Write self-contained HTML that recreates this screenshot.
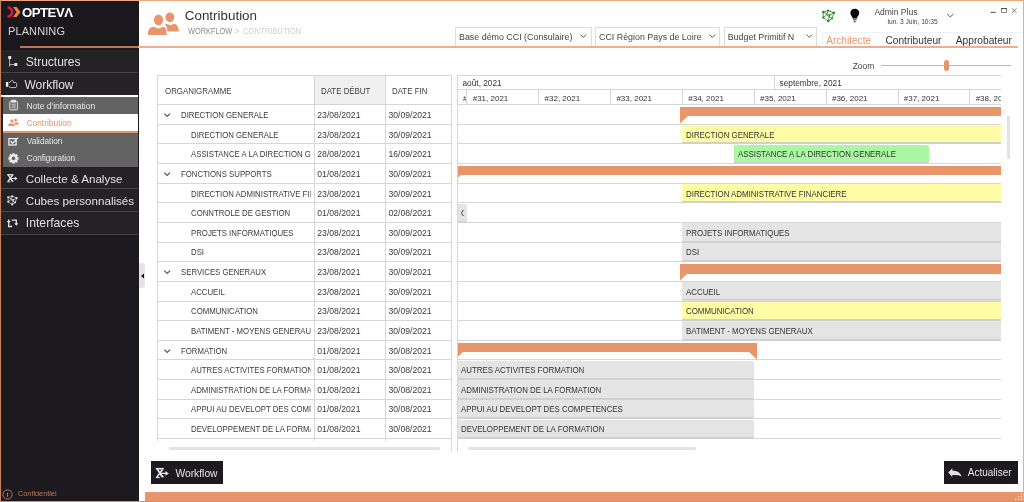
<!DOCTYPE html>
<html><head><meta charset="utf-8"><title>Opteva Planning</title>
<style>
*{margin:0;padding:0;box-sizing:border-box}
html,body{width:1024px;height:502px;overflow:hidden;background:#fff;font-family:"Liberation Sans",sans-serif;position:relative}
.a{position:absolute;white-space:nowrap}
svg{position:absolute;overflow:visible}
#w{position:absolute;left:0;top:0;width:1024px;height:502px;overflow:hidden;background:#fff;will-change:transform}
</style></head><body><div id="w">
<div class="a" style="left:0px;top:0px;width:139px;height:502px;background:#1c1a1e;"></div>
<div class="a" style="left:0px;top:0px;width:139px;height:50px;background:#1a181c;"></div>
<svg style="left:0;top:0" width="30" height="24">
  <path d="M7.6 7.2 Q12.2 8.6 12.2 12 Q12.2 15.4 7.6 16.8" fill="none" stroke="#e0193f" stroke-width="2.4"/>
  <path d="M13 7 L16.6 7 L20.4 12 L16.6 17 L13 17 L16.6 12 Z" fill="#f0833e"/>
</svg>
<div class="a" style="left:22px;top:5.63px;font-size:13.2px;line-height:13.2px;color:#fff;font-weight:bold;letter-spacing:-0.5px">OPTEVΛ</div>
<div class="a" style="left:8px;top:25.79px;font-size:11px;line-height:11px;color:#d4d4d4;letter-spacing:0.1px">PLANNING</div>
<div class="a" style="left:20px;top:46px;width:118px;height:2px;background:#b9755a;"></div>
<div class="a" style="left:1px;top:50px;width:137px;height:184px;background:#242224;"></div>
<div class="a" style="left:1px;top:72px;width:137px;height:1px;background:#464646;"></div>
<div class="a" style="left:1px;top:188px;width:137px;height:1px;background:#464646;"></div>
<div class="a" style="left:1px;top:211px;width:137px;height:1px;background:#464646;"></div>
<div class="a" style="left:1px;top:234px;width:137px;height:1px;background:#464646;"></div>
<div class="a" style="left:1px;top:95px;width:137px;height:2px;background:#fff;"></div>
<div class="a" style="left:3px;top:97px;width:135px;height:70px;background:#636363;"></div>
<div class="a" style="left:3px;top:114px;width:135px;height:17px;background:#fff;"></div>
<div class="a" style="left:3px;top:131px;width:135px;height:2px;background:#e8946a;"></div>
<div class="a" style="left:25.8px;top:56.04px;font-size:12px;line-height:12px;color:#e2e2e2;">Structures</div>
<div class="a" style="left:24.4px;top:79.04px;font-size:12px;line-height:12px;color:#e2e2e2;">Workflow</div>
<div class="a" style="left:26.5px;top:102.0px;font-size:8.5px;line-height:8.5px;color:#e8e8e8;">Note d'information</div>
<div class="a" style="left:26.5px;top:119.19px;font-size:8.4px;line-height:8.4px;color:#e8946a;">Contribution</div>
<div class="a" style="left:26.8px;top:138.42px;font-size:8.25px;line-height:8.25px;color:#e8e8e8;">Validation</div>
<div class="a" style="left:26.8px;top:155.2px;font-size:8.15px;line-height:8.15px;color:#e8e8e8;">Configuration</div>
<div class="a" style="left:25.8px;top:172.88px;font-size:11.6px;line-height:11.6px;color:#e2e2e2;">Collecte &amp; Analyse</div>
<div class="a" style="left:25.8px;top:194.98px;font-size:11.6px;line-height:11.6px;color:#e2e2e2;">Cubes personnalisés</div>
<div class="a" style="left:25.8px;top:217.47px;font-size:12.2px;line-height:12.2px;color:#e2e2e2;">Interfaces</div>
<svg style="left:0;top:0" width="139" height="240">
 <g fill="none" stroke="#e6e6e6">
  <rect x="8.2" y="56.1" width="3" height="3" fill="#e6e6e6" stroke="none" rx="0.4"/>
  <path d="M9.6 59 V66.6 M9.6 64.6 H14.6" stroke-width="0.75"/>
  <rect x="14.3" y="63.1" width="3" height="3" fill="#e6e6e6" stroke="none" rx="0.4"/>
 </g>
 <rect x="5.9" y="82" width="2.4" height="4.8" fill="#eee"/>
 <path d="M8.8 83.2 L11.6 80.6 Q12.4 79.9 12.9 80.8 L13.6 82.6 L15.6 82.6 Q16.8 82.8 16.7 84.6 L16.6 86.2 Q16.4 87.6 15 87.6 L10.8 87.6 L8.8 86.6" fill="none" stroke="#c8c8c8" stroke-width="0.95"/>
 <g fill="none" stroke="#e8e8e8" stroke-width="1">
  <rect x="9.8" y="101.3" width="7.6" height="8.6" rx="0.8"/>
  <rect x="11.8" y="100.3" width="3.6" height="1.8" fill="#e8e8e8"/>
  <path d="M11.5 104.2 H15.8 M11.5 106 H15.8 M11.5 107.8 H15.8" stroke-width="0.8"/>
 </g>
 <g fill="#e8946a" transform="translate(8.3 118.3) scale(0.335) translate(-147.9 -12)">
  <ellipse cx="158.5" cy="20" rx="4.6" ry="5.4"/>
  <path d="M147.9 35 C147.9 30 149.5 27.5 152.5 27 L154.3 26.7 Q158.5 30.2 162.7 26.7 L164.2 27 C166 27.8 166.6 30.5 166.6 35 Z"/>
  <ellipse cx="169.9" cy="17.3" rx="4.4" ry="4.9"/>
  <path d="M165 24.6 Q166 23.5 167.1 24 Q170.2 26.4 173.6 23.7 L175 23.9 C177.8 24.8 178.8 28 178.8 31.6 L167.4 31.6 C167.2 28 166.4 26 165 24.6 Z"/>
 </g>
 <g fill="none" stroke="#ececec" stroke-width="1.3">
  <rect x="8.9" y="138.6" width="7.2" height="6.4"/>
  <path d="M10.6 141 L12.6 143.2 L18.2 137.6"/>
 </g>
 <g fill="#ececec">
  <g transform="translate(13.5 158.4)">
   <circle r="3.8"/>
   <g id="t"><rect x="-1.3" y="-5.1" width="2.6" height="2.4"/></g>
   <rect x="-1.3" y="-5.1" width="2.6" height="2.4" transform="rotate(45)"/>
   <rect x="-1.3" y="-5.1" width="2.6" height="2.4" transform="rotate(90)"/>
   <rect x="-1.3" y="-5.1" width="2.6" height="2.4" transform="rotate(135)"/>
   <rect x="-1.3" y="-5.1" width="2.6" height="2.4" transform="rotate(180)"/>
   <rect x="-1.3" y="-5.1" width="2.6" height="2.4" transform="rotate(225)"/>
   <rect x="-1.3" y="-5.1" width="2.6" height="2.4" transform="rotate(270)"/>
   <rect x="-1.3" y="-5.1" width="2.6" height="2.4" transform="rotate(315)"/>
   <circle r="1.8" fill="#636363"/>
  </g>
 </g>
 <g transform="translate(7 174.2) scale(0.8) translate(-155.7 -468)">
  <g fill="none" stroke="#e6e6e6">
   <path d="M155.8 468.7 H163.8" stroke-width="1.6"/>
   <path d="M157.2 469 L162.6 477.3 M162.8 469 L156.8 477.3" stroke-width="1.7"/>
   <path d="M155.8 477.6 H159.8" stroke-width="1.1"/>
   <path d="M159.6 473.4 H166.4 M160.4 474.2 L163.6 477.2" stroke-width="1.3"/>
  </g><path d="M165.4 471 L168.8 473.4 L165.4 475.8 Z" fill="#e6e6e6"/>
 </g>
 <g transform="translate(7 195.3) scale(0.8) translate(-821.7 -9.5)">
  <g stroke="#dcdcdc" stroke-width="0.9" fill="none">
   <path d="M823.2 12 L828.2 10.6 L833.9 12.8 L832 18.4 L828.2 21 L823.2 17.6 Z"/>
   <path d="M823.2 12 L829.6 15.2 L833.9 12.8 M829.6 15.2 L828.2 21 M826.5 15 L832 18.4 M826.5 15 L828.2 10.6 M826.5 15 L823.2 17.6"/>
  </g>
  <g fill="#e6e6e6"><circle cx="823.2" cy="12" r="1.3"/><circle cx="828.2" cy="10.6" r="1.2"/><circle cx="833.9" cy="12.8" r="1.3"/><circle cx="832" cy="18.4" r="1.1"/><circle cx="828.2" cy="21" r="1.3"/><circle cx="823.2" cy="17.6" r="1.2"/><circle cx="829.6" cy="15.2" r="1"/></g>
 </g>
 <g fill="none" stroke="#e6e6e6" stroke-width="1.3">
  <path d="M8.7 219.6 V226.5 H12.2 M7.2 221.6 H10.4"/>
  <path d="M11.8 220.2 H16.3 V224.2"/>
 </g>
 <path d="M14.3 223.2 L16.3 225.8 L18.3 223.2 Z" fill="#e6e6e6"/>
</svg>
<svg style="left:0;top:486px" width="16" height="16">
  <circle cx="7.5" cy="8.5" r="4.6" fill="none" stroke="#b8795a" stroke-width="1"/>
  <rect x="7" y="6.6" width="1.1" height="4.2" fill="#b8795a"/>
</svg>
<div class="a" style="left:18px;top:489.62px;font-size:7.3px;line-height:7.3px;color:#b8795a;">Confidentiel</div>
<div class="a" style="left:138.5px;top:263px;width:6.2px;height:25.3px;background:#e4e4e4;border-radius:0 3px 3px 0"></div>
<svg style="left:0;top:0" width="150" height="300"><path d="M141 275.9 L144 273.4 L144 278.4 Z" fill="#111"/></svg>
<svg style="left:0;top:0" width="200" height="46">
 <g fill="#e9956b" id="ppl">
  <ellipse cx="158.5" cy="20" rx="4.6" ry="5.4"/>
  <path d="M147.9 35 C147.9 30 149.5 27.5 152.5 27 L154.3 26.7 Q158.5 30.2 162.7 26.7 L164.2 27 C166 27.8 166.6 30.5 166.6 35 Z"/>
  <ellipse cx="169.9" cy="17.3" rx="4.4" ry="4.9"/>
  <path d="M165 24.6 Q166 23.5 167.1 24 Q170.2 26.4 173.6 23.7 L175 23.9 C177.8 24.8 178.8 28 178.8 31.6 L167.4 31.6 C167.2 28 166.4 26 165 24.6 Z"/>
 </g>
</svg>
<div class="a" style="left:184.8px;top:8.76px;font-size:13.4px;line-height:13.4px;color:#333;">Contribution</div>
<div class="a" style="left:188px;top:26.84px;font-size:8.7px;line-height:8.7px;color:#8a8a8a;transform-origin:0 0;transform:scaleX(0.85)">WORKFLOW</div>
<div class="a" style="left:235px;top:26.84px;font-size:8.7px;line-height:8.7px;color:#c4c4c4;transform-origin:0 0;transform:scaleX(0.85)">&gt;</div>
<div class="a" style="left:242.8px;top:26.84px;font-size:8.7px;line-height:8.7px;color:#cfcfcf;transform-origin:0 0;transform:scaleX(0.879)">CONTRIBUTION</div>
<div class="a" style="left:455.4px;top:27px;width:136.2px;height:19px;background:#fff;border:1px solid #dcdcdc;border-bottom:none"></div>
<div class="a" style="left:459px;top:32.97px;font-size:8.9px;line-height:8.9px;color:#444;">Base démo CCI (Consulaire)</div>
<svg style="left:579.6px;top:34.4px" width="7" height="5"><path d="M0.5 0.6 L3.3 3.4 L6.1 0.6" fill="none" stroke="#555" stroke-width="1"/></svg>
<div class="a" style="left:594.7px;top:27px;width:125.3px;height:19px;background:#fff;border:1px solid #dcdcdc;border-bottom:none"></div>
<div class="a" style="left:599px;top:32.97px;font-size:8.9px;line-height:8.9px;color:#444;">CCI Région Pays de Loire</div>
<svg style="left:709.4px;top:34.4px" width="7" height="5"><path d="M0.5 0.6 L3.3 3.4 L6.1 0.6" fill="none" stroke="#555" stroke-width="1"/></svg>
<div class="a" style="left:723.5px;top:27px;width:93.5px;height:19px;background:#fff;border:1px solid #dcdcdc;border-bottom:none"></div>
<div class="a" style="left:727.7px;top:32.97px;font-size:8.9px;line-height:8.9px;color:#444;">Budget Primitif N</div>
<svg style="left:805.5px;top:34.4px" width="7" height="5"><path d="M0.5 0.6 L3.3 3.4 L6.1 0.6" fill="none" stroke="#555" stroke-width="1"/></svg>
<div class="a" style="left:138px;top:46px;width:880px;height:2px;background:#efae8e;"></div>
<div class="a" style="left:822px;top:31.5px;width:200px;height:15px;background:transparent;border:1px solid #eef3f8;border-bottom:none;border-right:none"></div>
<div class="a" style="left:826.2px;top:35.85px;font-size:10.1px;line-height:10.1px;color:#e9956b;">Architecte</div>
<div class="a" style="left:885.4px;top:35.77px;font-size:10.2px;line-height:10.2px;color:#333;">Contributeur</div>
<div class="a" style="left:955.8px;top:35.77px;font-size:10.2px;line-height:10.2px;color:#333;">Approbateur</div>
<svg style="left:0;top:0" width="1024" height="30">
 <g stroke="#1e8c1e" stroke-width="0.8" fill="none">
  <path d="M823.2 12 L828.2 10.6 L833.9 12.8 L832 18.4 L828.2 21 L823.2 17.6 Z"/>
  <path d="M823.2 12 L829.6 15.2 L833.9 12.8 M829.6 15.2 L828.2 21 M826.5 15 L832 18.4 M826.5 15 L828.2 10.6 M826.5 15 L823.2 17.6"/>
 </g>
 <g fill="#1e8c1e"><circle cx="823.2" cy="12" r="1.2"/><circle cx="828.2" cy="10.6" r="1.1"/><circle cx="833.9" cy="12.8" r="1.3"/><circle cx="832" cy="18.4" r="1"/><circle cx="828.2" cy="21" r="1.2"/><circle cx="823.2" cy="17.6" r="1.1"/><circle cx="829.6" cy="15.2" r="0.9"/></g>
 <path d="M854.8 8.7 C857.5 8.7 859.2 10.6 859.2 13 C859.2 15.2 857.4 16.6 856.8 18.4 L852.8 18.4 C852.2 16.6 850.4 15.2 850.4 13 C850.4 10.6 852.1 8.7 854.8 8.7 Z" fill="#000"/>
 <rect x="853" y="19" width="3.6" height="1.2" fill="#666"/>
 <rect x="853.3" y="20.6" width="3" height="1.2" fill="#777"/>
 <rect x="854" y="22" width="1.6" height="0.7" fill="#888"/>
 <path d="M947.2 14 L950.3 17 L953.4 14" fill="none" stroke="#555" stroke-width="1"/>
 <rect x="990.6" y="11.8" width="5.2" height="1.1" fill="#555"/>
 <rect x="1001.5" y="8.4" width="5.1" height="4.2" fill="none" stroke="#666" stroke-width="0.75"/>
 <rect x="1001.2" y="8" width="5.7" height="1.1" fill="#555"/>
 <path d="M1012 8.4 L1016.5 12.7 M1016.5 8.4 L1012 12.7" stroke="#666" stroke-width="0.85"/>
</svg>
<div class="a" style="left:874.4px;top:7.8px;font-size:8.5px;line-height:8.5px;color:#444;">Admin Plus</div>
<div class="a" style="left:887.6px;top:18.53px;font-size:6.7px;line-height:6.7px;color:#444;letter-spacing:-0.05px">lun. 3 Juin, 10:35</div>
<div class="a" style="left:852.7px;top:62.25px;font-size:8.45px;line-height:8.45px;color:#444;">Zoom</div>
<div class="a" style="left:881.3px;top:64.6px;width:130px;height:1.2px;background:#b8b8b8;"></div>
<div class="a" style="left:943.8px;top:59.9px;width:5.2px;height:10.9px;background:#e9956b;border-radius:2.6px"></div>
<div class="a" style="left:314.5px;top:75.5px;width:71px;height:29px;background:#f0f0f0;"></div>
<div class="a" style="left:157.5px;top:75px;width:294.3px;height:1px;background:#d6d6d6;"></div>
<div class="a" style="left:157.5px;top:104.2px;width:294.3px;height:1px;background:#d6d6d6;"></div>
<div class="a" style="left:157.5px;top:123.83px;width:294.3px;height:1px;background:#d6d6d6;"></div>
<div class="a" style="left:157.5px;top:143.46px;width:294.3px;height:1px;background:#d6d6d6;"></div>
<div class="a" style="left:157.5px;top:163.09px;width:294.3px;height:1px;background:#d6d6d6;"></div>
<div class="a" style="left:157.5px;top:182.72px;width:294.3px;height:1px;background:#d6d6d6;"></div>
<div class="a" style="left:157.5px;top:202.35px;width:294.3px;height:1px;background:#d6d6d6;"></div>
<div class="a" style="left:157.5px;top:221.98px;width:294.3px;height:1px;background:#d6d6d6;"></div>
<div class="a" style="left:157.5px;top:241.61px;width:294.3px;height:1px;background:#d6d6d6;"></div>
<div class="a" style="left:157.5px;top:261.24px;width:294.3px;height:1px;background:#d6d6d6;"></div>
<div class="a" style="left:157.5px;top:280.87px;width:294.3px;height:1px;background:#d6d6d6;"></div>
<div class="a" style="left:157.5px;top:300.5px;width:294.3px;height:1px;background:#d6d6d6;"></div>
<div class="a" style="left:157.5px;top:320.13px;width:294.3px;height:1px;background:#d6d6d6;"></div>
<div class="a" style="left:157.5px;top:339.76px;width:294.3px;height:1px;background:#d6d6d6;"></div>
<div class="a" style="left:157.5px;top:359.39px;width:294.3px;height:1px;background:#d6d6d6;"></div>
<div class="a" style="left:157.5px;top:379.02px;width:294.3px;height:1px;background:#d6d6d6;"></div>
<div class="a" style="left:157.5px;top:398.65px;width:294.3px;height:1px;background:#d6d6d6;"></div>
<div class="a" style="left:157.5px;top:418.28px;width:294.3px;height:1px;background:#d6d6d6;"></div>
<div class="a" style="left:157.5px;top:437.91px;width:294.3px;height:1px;background:#d6d6d6;"></div>
<div class="a" style="left:157.2px;top:75px;width:1px;height:365.5px;background:#d6d6d6;"></div>
<div class="a" style="left:313.9px;top:75px;width:1px;height:365.5px;background:#d6d6d6;"></div>
<div class="a" style="left:385px;top:75px;width:1px;height:365.5px;background:#d6d6d6;"></div>
<div class="a" style="left:450.8px;top:75px;width:1px;height:376px;background:#d6d6d6;"></div>
<div class="a" style="left:164.5px;top:87.12px;font-size:8.6px;line-height:8.6px;color:#3c3c3c;transform-origin:0 0;transform:scaleX(0.918)">ORGANIGRAMME</div>
<div class="a" style="left:321px;top:87.12px;font-size:8.6px;line-height:8.6px;color:#3c3c3c;transform-origin:0 0;transform:scaleX(0.918)">DATE DÉBUT</div>
<div class="a" style="left:392px;top:87.12px;font-size:8.6px;line-height:8.6px;color:#3c3c3c;transform-origin:0 0;transform:scaleX(0.918)">DATE FIN</div>
<svg style="left:164px;top:113.0px" width="7" height="5"><path d="M0.3 0.6 L3.2 3.5 L6.1 0.6" fill="none" stroke="#555" stroke-width="1.2"/></svg>
<div class="a" style="left:180.5px;top:111.02px;width:142.78px;overflow:hidden;font-size:8.6px;line-height:8.6px;color:#3a3a3a;transform-origin:0 0;transform:scaleX(0.907)">DIRECTION GENERALE</div>
<div class="a" style="left:317.3px;top:110.98px;font-size:8.65px;line-height:8.65px;color:#3a3a3a;">23/08/2021</div>
<div class="a" style="left:388.5px;top:110.98px;font-size:8.65px;line-height:8.65px;color:#3a3a3a;">30/09/2021</div>
<div class="a" style="left:190.5px;top:130.65px;width:131.75px;overflow:hidden;font-size:8.6px;line-height:8.6px;color:#3a3a3a;transform-origin:0 0;transform:scaleX(0.907)">DIRECTION GENERALE</div>
<div class="a" style="left:317.3px;top:130.61px;font-size:8.65px;line-height:8.65px;color:#3a3a3a;">23/08/2021</div>
<div class="a" style="left:388.5px;top:130.61px;font-size:8.65px;line-height:8.65px;color:#3a3a3a;">30/09/2021</div>
<div class="a" style="left:190.5px;top:150.28px;width:131.75px;overflow:hidden;font-size:8.6px;line-height:8.6px;color:#3a3a3a;transform-origin:0 0;transform:scaleX(0.907)">ASSISTANCE A LA DIRECTION GENERALE</div>
<div class="a" style="left:317.3px;top:150.24px;font-size:8.65px;line-height:8.65px;color:#3a3a3a;">28/08/2021</div>
<div class="a" style="left:388.5px;top:150.24px;font-size:8.65px;line-height:8.65px;color:#3a3a3a;">16/09/2021</div>
<svg style="left:164px;top:171.89px" width="7" height="5"><path d="M0.3 0.6 L3.2 3.5 L6.1 0.6" fill="none" stroke="#555" stroke-width="1.2"/></svg>
<div class="a" style="left:180.5px;top:169.91px;width:142.78px;overflow:hidden;font-size:8.6px;line-height:8.6px;color:#3a3a3a;transform-origin:0 0;transform:scaleX(0.907)">FONCTIONS SUPPORTS</div>
<div class="a" style="left:317.3px;top:169.87px;font-size:8.65px;line-height:8.65px;color:#3a3a3a;">01/08/2021</div>
<div class="a" style="left:388.5px;top:169.87px;font-size:8.65px;line-height:8.65px;color:#3a3a3a;">30/09/2021</div>
<div class="a" style="left:190.5px;top:189.54px;width:131.75px;overflow:hidden;font-size:8.6px;line-height:8.6px;color:#3a3a3a;transform-origin:0 0;transform:scaleX(0.907)">DIRECTION ADMINISTRATIVE FINANCIERE</div>
<div class="a" style="left:317.3px;top:189.5px;font-size:8.65px;line-height:8.65px;color:#3a3a3a;">23/08/2021</div>
<div class="a" style="left:388.5px;top:189.5px;font-size:8.65px;line-height:8.65px;color:#3a3a3a;">30/09/2021</div>
<div class="a" style="left:190.5px;top:209.17px;width:131.75px;overflow:hidden;font-size:8.6px;line-height:8.6px;color:#3a3a3a;transform-origin:0 0;transform:scaleX(0.907)">CONNTROLE DE GESTION</div>
<div class="a" style="left:317.3px;top:209.13px;font-size:8.65px;line-height:8.65px;color:#3a3a3a;">01/08/2021</div>
<div class="a" style="left:388.5px;top:209.13px;font-size:8.65px;line-height:8.65px;color:#3a3a3a;">02/08/2021</div>
<div class="a" style="left:190.5px;top:228.8px;width:131.75px;overflow:hidden;font-size:8.6px;line-height:8.6px;color:#3a3a3a;transform-origin:0 0;transform:scaleX(0.907)">PROJETS INFORMATIQUES</div>
<div class="a" style="left:317.3px;top:228.76px;font-size:8.65px;line-height:8.65px;color:#3a3a3a;">23/08/2021</div>
<div class="a" style="left:388.5px;top:228.76px;font-size:8.65px;line-height:8.65px;color:#3a3a3a;">30/09/2021</div>
<div class="a" style="left:190.5px;top:248.43px;width:131.75px;overflow:hidden;font-size:8.6px;line-height:8.6px;color:#3a3a3a;transform-origin:0 0;transform:scaleX(0.907)">DSI</div>
<div class="a" style="left:317.3px;top:248.39px;font-size:8.65px;line-height:8.65px;color:#3a3a3a;">23/08/2021</div>
<div class="a" style="left:388.5px;top:248.39px;font-size:8.65px;line-height:8.65px;color:#3a3a3a;">30/09/2021</div>
<svg style="left:164px;top:270.04px" width="7" height="5"><path d="M0.3 0.6 L3.2 3.5 L6.1 0.6" fill="none" stroke="#555" stroke-width="1.2"/></svg>
<div class="a" style="left:180.5px;top:268.06px;width:142.78px;overflow:hidden;font-size:8.6px;line-height:8.6px;color:#3a3a3a;transform-origin:0 0;transform:scaleX(0.907)">SERVICES GENERAUX</div>
<div class="a" style="left:317.3px;top:268.02px;font-size:8.65px;line-height:8.65px;color:#3a3a3a;">23/08/2021</div>
<div class="a" style="left:388.5px;top:268.02px;font-size:8.65px;line-height:8.65px;color:#3a3a3a;">30/09/2021</div>
<div class="a" style="left:190.5px;top:287.69px;width:131.75px;overflow:hidden;font-size:8.6px;line-height:8.6px;color:#3a3a3a;transform-origin:0 0;transform:scaleX(0.907)">ACCUEIL</div>
<div class="a" style="left:317.3px;top:287.65px;font-size:8.65px;line-height:8.65px;color:#3a3a3a;">23/08/2021</div>
<div class="a" style="left:388.5px;top:287.65px;font-size:8.65px;line-height:8.65px;color:#3a3a3a;">30/09/2021</div>
<div class="a" style="left:190.5px;top:307.32px;width:131.75px;overflow:hidden;font-size:8.6px;line-height:8.6px;color:#3a3a3a;transform-origin:0 0;transform:scaleX(0.907)">COMMUNICATION</div>
<div class="a" style="left:317.3px;top:307.28px;font-size:8.65px;line-height:8.65px;color:#3a3a3a;">23/08/2021</div>
<div class="a" style="left:388.5px;top:307.28px;font-size:8.65px;line-height:8.65px;color:#3a3a3a;">30/09/2021</div>
<div class="a" style="left:190.5px;top:326.95px;width:131.75px;overflow:hidden;font-size:8.6px;line-height:8.6px;color:#3a3a3a;transform-origin:0 0;transform:scaleX(0.907)">BATIMENT - MOYENS GENERAUX</div>
<div class="a" style="left:317.3px;top:326.91px;font-size:8.65px;line-height:8.65px;color:#3a3a3a;">23/08/2021</div>
<div class="a" style="left:388.5px;top:326.91px;font-size:8.65px;line-height:8.65px;color:#3a3a3a;">30/09/2021</div>
<svg style="left:164px;top:348.56px" width="7" height="5"><path d="M0.3 0.6 L3.2 3.5 L6.1 0.6" fill="none" stroke="#555" stroke-width="1.2"/></svg>
<div class="a" style="left:180.5px;top:346.58px;width:142.78px;overflow:hidden;font-size:8.6px;line-height:8.6px;color:#3a3a3a;transform-origin:0 0;transform:scaleX(0.907)">FORMATION</div>
<div class="a" style="left:317.3px;top:346.54px;font-size:8.65px;line-height:8.65px;color:#3a3a3a;">01/08/2021</div>
<div class="a" style="left:388.5px;top:346.54px;font-size:8.65px;line-height:8.65px;color:#3a3a3a;">30/08/2021</div>
<div class="a" style="left:190.5px;top:366.21px;width:131.75px;overflow:hidden;font-size:8.6px;line-height:8.6px;color:#3a3a3a;transform-origin:0 0;transform:scaleX(0.907)">AUTRES ACTIVITES FORMATION</div>
<div class="a" style="left:317.3px;top:366.17px;font-size:8.65px;line-height:8.65px;color:#3a3a3a;">01/08/2021</div>
<div class="a" style="left:388.5px;top:366.17px;font-size:8.65px;line-height:8.65px;color:#3a3a3a;">30/08/2021</div>
<div class="a" style="left:190.5px;top:385.84px;width:131.75px;overflow:hidden;font-size:8.6px;line-height:8.6px;color:#3a3a3a;transform-origin:0 0;transform:scaleX(0.907)">ADMINISTRATION DE LA FORMATION</div>
<div class="a" style="left:317.3px;top:385.8px;font-size:8.65px;line-height:8.65px;color:#3a3a3a;">01/08/2021</div>
<div class="a" style="left:388.5px;top:385.8px;font-size:8.65px;line-height:8.65px;color:#3a3a3a;">30/08/2021</div>
<div class="a" style="left:190.5px;top:405.47px;width:131.75px;overflow:hidden;font-size:8.6px;line-height:8.6px;color:#3a3a3a;transform-origin:0 0;transform:scaleX(0.907)">APPUI AU DEVELOPT DES COMPETENCES</div>
<div class="a" style="left:317.3px;top:405.43px;font-size:8.65px;line-height:8.65px;color:#3a3a3a;">01/08/2021</div>
<div class="a" style="left:388.5px;top:405.43px;font-size:8.65px;line-height:8.65px;color:#3a3a3a;">30/08/2021</div>
<div class="a" style="left:190.5px;top:425.1px;width:131.75px;overflow:hidden;font-size:8.6px;line-height:8.6px;color:#3a3a3a;transform-origin:0 0;transform:scaleX(0.907)">DEVELOPPEMENT DE LA FORMATION</div>
<div class="a" style="left:317.3px;top:425.06px;font-size:8.65px;line-height:8.65px;color:#3a3a3a;">01/08/2021</div>
<div class="a" style="left:388.5px;top:425.06px;font-size:8.65px;line-height:8.65px;color:#3a3a3a;">30/08/2021</div>
<div class="a" style="left:168.7px;top:447.4px;width:271px;height:3px;background:#e2e2e2;border-radius:1.5px"></div>
<div class="a" style="left:457.5px;top:75px;width:543.5px;height:366px;overflow:hidden">
<div class="a" style="left:0.0px;top:0px;width:543.5px;height:1px;background:#d6d6d6;"></div>
<div class="a" style="left:0.0px;top:13.6px;width:543.5px;height:1px;background:#d6d6d6;"></div>
<div class="a" style="left:0.0px;top:29.2px;width:543.5px;height:1px;background:#d6d6d6;"></div>
<div class="a" style="left:316.8px;top:0px;width:1px;height:14px;background:#d6d6d6;"></div>
<div class="a" style="left:5.0px;top:4.07px;font-size:8.3px;line-height:8.3px;color:#333;">août, 2021</div>
<div class="a" style="left:322.0px;top:4.07px;font-size:8.3px;line-height:8.3px;color:#333;">septembre, 2021</div>
<div class="a" style="left:5.4px;top:19.53px;font-size:8px;line-height:8px;color:#333;width:3.6px;overflow:hidden">#</div>
<div class="a" style="left:8.9px;top:13.6px;width:1px;height:15.6px;background:#d6d6d6;"></div>
<div class="a" style="left:15.2px;top:19.53px;font-size:8px;line-height:8px;color:#333;">#31, 2021</div>
<div class="a" style="left:80.75px;top:13.6px;width:1px;height:15.6px;background:#d6d6d6;"></div>
<div class="a" style="left:87.05px;top:19.53px;font-size:8px;line-height:8px;color:#333;">#32, 2021</div>
<div class="a" style="left:152.6px;top:13.6px;width:1px;height:15.6px;background:#d6d6d6;"></div>
<div class="a" style="left:158.9px;top:19.53px;font-size:8px;line-height:8px;color:#333;">#33, 2021</div>
<div class="a" style="left:224.45px;top:13.6px;width:1px;height:15.6px;background:#d6d6d6;"></div>
<div class="a" style="left:230.75px;top:19.53px;font-size:8px;line-height:8px;color:#333;">#34, 2021</div>
<div class="a" style="left:296.3px;top:13.6px;width:1px;height:15.6px;background:#d6d6d6;"></div>
<div class="a" style="left:302.6px;top:19.53px;font-size:8px;line-height:8px;color:#333;">#35, 2021</div>
<div class="a" style="left:368.15px;top:13.6px;width:1px;height:15.6px;background:#d6d6d6;"></div>
<div class="a" style="left:374.45px;top:19.53px;font-size:8px;line-height:8px;color:#333;">#36, 2021</div>
<div class="a" style="left:440.0px;top:13.6px;width:1px;height:15.6px;background:#d6d6d6;"></div>
<div class="a" style="left:446.3px;top:19.53px;font-size:8px;line-height:8px;color:#333;">#37, 2021</div>
<div class="a" style="left:511.85px;top:13.6px;width:1px;height:15.6px;background:#d6d6d6;"></div>
<div class="a" style="left:518.15px;top:19.53px;font-size:8px;line-height:8px;color:#333;">#38, 2021</div>
<div class="a" style="left:0.0px;top:29.2px;width:543.5px;height:1px;background:#d6d6d6;"></div>
<div class="a" style="left:0.0px;top:48.83px;width:543.5px;height:1px;background:#d6d6d6;"></div>
<div class="a" style="left:0.0px;top:68.46px;width:543.5px;height:1px;background:#d6d6d6;"></div>
<div class="a" style="left:0.0px;top:88.09px;width:543.5px;height:1px;background:#d6d6d6;"></div>
<div class="a" style="left:0.0px;top:107.72px;width:543.5px;height:1px;background:#d6d6d6;"></div>
<div class="a" style="left:0.0px;top:127.35px;width:543.5px;height:1px;background:#d6d6d6;"></div>
<div class="a" style="left:0.0px;top:146.98px;width:543.5px;height:1px;background:#d6d6d6;"></div>
<div class="a" style="left:0.0px;top:166.61px;width:543.5px;height:1px;background:#d6d6d6;"></div>
<div class="a" style="left:0.0px;top:186.24px;width:543.5px;height:1px;background:#d6d6d6;"></div>
<div class="a" style="left:0.0px;top:205.87px;width:543.5px;height:1px;background:#d6d6d6;"></div>
<div class="a" style="left:0.0px;top:225.5px;width:543.5px;height:1px;background:#d6d6d6;"></div>
<div class="a" style="left:0.0px;top:245.13px;width:543.5px;height:1px;background:#d6d6d6;"></div>
<div class="a" style="left:0.0px;top:264.76px;width:543.5px;height:1px;background:#d6d6d6;"></div>
<div class="a" style="left:0.0px;top:284.39px;width:543.5px;height:1px;background:#d6d6d6;"></div>
<div class="a" style="left:0.0px;top:304.02px;width:543.5px;height:1px;background:#d6d6d6;"></div>
<div class="a" style="left:0.0px;top:323.65px;width:543.5px;height:1px;background:#d6d6d6;"></div>
<div class="a" style="left:0.0px;top:343.28px;width:543.5px;height:1px;background:#d6d6d6;"></div>
<div class="a" style="left:0.0px;top:362.91px;width:543.5px;height:1px;background:#d6d6d6;"></div>
<div class="a" style="left:222.25px;top:32.2px;width:420.25px;height:9.3px;background:#e9956b;"></div>
<svg style="left:222.25px;top:41.3px" width="9" height="8"><path d="M0 0 L8 0 L0 7.6 Z" fill="#e9956b"/></svg>
<div class="a" style="left:224.05px;top:50.13px;width:418.45px;height:17.3px;background:#fffca6;border-radius:0 2px 2px 0;box-shadow:0 1.8px 0 #cfcfcf"></div>
<div class="a" style="left:228.25px;top:55.67px;width:453.09px;overflow:hidden;font-size:8.7px;line-height:8.7px;color:#333;transform-origin:0 0;transform:scaleX(0.907)">DIRECTION GENERALE</div>
<div class="a" style="left:276.07px;top:69.76px;width:195.02px;height:17.3px;background:#a9f8a1;border-radius:0 2px 2px 0;box-shadow:0 1.8px 0 #cfcfcf"></div>
<div class="a" style="left:280.27px;top:75.3px;width:206.75px;overflow:hidden;font-size:8.7px;line-height:8.7px;color:#333;transform-origin:0 0;transform:scaleX(0.907)">ASSISTANCE A LA DIRECTION GENERALE</div>
<div class="a" style="left:-4.06px;top:91.09px;width:646.56px;height:9.3px;background:#e9956b;"></div>
<svg style="left:-4.06px;top:100.19px" width="9" height="8"><path d="M0 0 L8 0 L0 7.6 Z" fill="#e9956b"/></svg>
<div class="a" style="left:224.05px;top:109.02px;width:418.45px;height:17.3px;background:#fffca6;border-radius:0 2px 2px 0;box-shadow:0 1.8px 0 #cfcfcf"></div>
<div class="a" style="left:228.25px;top:114.56px;width:453.09px;overflow:hidden;font-size:8.7px;line-height:8.7px;color:#333;transform-origin:0 0;transform:scaleX(0.907)">DIRECTION ADMINISTRATIVE FINANCIERE</div>
<div class="a" style="left:-1.06px;top:128.65px;width:10.26px;height:17.3px;background:#e4e4e4;border-radius:0 2px 2px 0;box-shadow:0 1.8px 0 #cfcfcf"></div>
<div class="a" style="left:3.14px;top:134.19px;width:3.05px;overflow:hidden;font-size:8.7px;line-height:8.7px;color:#333;transform-origin:0 0;transform:scaleX(0.907)">CONNTROLE DE GESTION</div>
<div class="a" style="left:224.05px;top:148.28px;width:418.45px;height:17.3px;background:#e4e4e4;border-radius:0 2px 2px 0;box-shadow:0 1.8px 0 #cfcfcf"></div>
<div class="a" style="left:228.25px;top:153.82px;width:453.09px;overflow:hidden;font-size:8.7px;line-height:8.7px;color:#333;transform-origin:0 0;transform:scaleX(0.907)">PROJETS INFORMATIQUES</div>
<div class="a" style="left:224.05px;top:167.91px;width:418.45px;height:17.3px;background:#e4e4e4;border-radius:0 2px 2px 0;box-shadow:0 1.8px 0 #cfcfcf"></div>
<div class="a" style="left:228.25px;top:173.45px;width:453.09px;overflow:hidden;font-size:8.7px;line-height:8.7px;color:#333;transform-origin:0 0;transform:scaleX(0.907)">DSI</div>
<div class="a" style="left:222.25px;top:189.24px;width:420.25px;height:9.3px;background:#e9956b;"></div>
<svg style="left:222.25px;top:198.34px" width="9" height="8"><path d="M0 0 L8 0 L0 7.6 Z" fill="#e9956b"/></svg>
<div class="a" style="left:224.05px;top:207.17px;width:418.45px;height:17.3px;background:#e4e4e4;border-radius:0 2px 2px 0;box-shadow:0 1.8px 0 #cfcfcf"></div>
<div class="a" style="left:228.25px;top:212.71px;width:453.09px;overflow:hidden;font-size:8.7px;line-height:8.7px;color:#333;transform-origin:0 0;transform:scaleX(0.907)">ACCUEIL</div>
<div class="a" style="left:224.05px;top:226.8px;width:418.45px;height:17.3px;background:#fffca6;border-radius:0 2px 2px 0;box-shadow:0 1.8px 0 #cfcfcf"></div>
<div class="a" style="left:228.25px;top:232.34px;width:453.09px;overflow:hidden;font-size:8.7px;line-height:8.7px;color:#333;transform-origin:0 0;transform:scaleX(0.907)">COMMUNICATION</div>
<div class="a" style="left:224.05px;top:246.43px;width:418.45px;height:17.3px;background:#e4e4e4;border-radius:0 2px 2px 0;box-shadow:0 1.8px 0 #cfcfcf"></div>
<div class="a" style="left:228.25px;top:251.97px;width:453.09px;overflow:hidden;font-size:8.7px;line-height:8.7px;color:#333;transform-origin:0 0;transform:scaleX(0.907)">BATIMENT - MOYENS GENERAUX</div>
<div class="a" style="left:-3.0px;top:267.76px;width:302.1px;height:9.3px;background:#e9956b;"></div>
<svg style="left:-3.0px;top:276.86px" width="9" height="8"><path d="M0 0 L8 0 L0 7.6 Z" fill="#e9956b"/></svg>
<svg style="left:291.1px;top:276.86px" width="9" height="8"><path d="M0 0 L8 0 L8 7.6 Z" fill="#e9956b"/></svg>
<div class="a" style="left:-1.06px;top:285.69px;width:297.66px;height:17.3px;background:#e4e4e4;border-radius:0 2px 2px 0;box-shadow:0 1.8px 0 #cfcfcf"></div>
<div class="a" style="left:3.14px;top:291.23px;width:319.92px;overflow:hidden;font-size:8.7px;line-height:8.7px;color:#333;transform-origin:0 0;transform:scaleX(0.907)">AUTRES ACTIVITES FORMATION</div>
<div class="a" style="left:-1.06px;top:305.32px;width:297.66px;height:17.3px;background:#e4e4e4;border-radius:0 2px 2px 0;box-shadow:0 1.8px 0 #cfcfcf"></div>
<div class="a" style="left:3.14px;top:310.86px;width:319.92px;overflow:hidden;font-size:8.7px;line-height:8.7px;color:#333;transform-origin:0 0;transform:scaleX(0.907)">ADMINISTRATION DE LA FORMATION</div>
<div class="a" style="left:-1.06px;top:324.95px;width:297.66px;height:17.3px;background:#e4e4e4;border-radius:0 2px 2px 0;box-shadow:0 1.8px 0 #cfcfcf"></div>
<div class="a" style="left:3.14px;top:330.49px;width:319.92px;overflow:hidden;font-size:8.7px;line-height:8.7px;color:#333;transform-origin:0 0;transform:scaleX(0.907)">APPUI AU DEVELOPT DES COMPETENCES</div>
<div class="a" style="left:-1.06px;top:344.58px;width:297.66px;height:17.3px;background:#e4e4e4;border-radius:0 2px 2px 0;box-shadow:0 1.8px 0 #cfcfcf"></div>
<div class="a" style="left:3.14px;top:350.12px;width:319.92px;overflow:hidden;font-size:8.7px;line-height:8.7px;color:#333;transform-origin:0 0;transform:scaleX(0.907)">DEVELOPPEMENT DE LA FORMATION</div>
</div>
<div class="a" style="left:457.2px;top:75px;width:1px;height:376px;background:#d6d6d6;"></div>
<div class="a" style="left:467.5px;top:447.4px;width:228px;height:3px;background:#e2e2e2;border-radius:1.5px"></div>
<div class="a" style="left:1007.3px;top:116px;width:2.6px;height:43px;background:#e2e2e2;border-radius:1.3px"></div>
<div class="a" style="left:151px;top:461px;width:72px;height:23px;background:#1c1a1e;"></div>
<svg style="left:0;top:0" width="240" height="502"><g fill="none" stroke="#e4e4e4"><path d="M155.8 468.7 H163.8" stroke-width="1.6"/><path d="M157.2 469 L162.6 477.3 M162.8 469 L156.8 477.3" stroke-width="1.7"/><path d="M155.8 477.6 H159.8" stroke-width="1.1"/><path d="M159.6 473.4 H166.4 M160.4 474.2 L163.6 477.2" stroke-width="1.3"/></g><path d="M165.4 471 L168.8 473.4 L165.4 475.8 Z" fill="#e4e4e4"/></svg>
<div class="a" style="left:175.4px;top:468.58px;font-size:10.3px;line-height:10.3px;color:#e6e6e6;">Workflow</div>
<div class="a" style="left:943.5px;top:460.8px;width:74.2px;height:23.2px;background:#1c1a1e;"></div>
<svg style="left:0;top:0" width="1024" height="502"><path d="M948.2 472.6 L952.3 468.2 L952.3 470.4 Q959.8 470.6 961.6 476.4 Q958.5 474.7 952.3 475 L952.3 477 Z" fill="#e0e0e0"/></svg>
<div class="a" style="left:967.8px;top:468.24px;font-size:10px;line-height:10px;color:#e6e6e6;">Actualiser</div>
<div class="a" style="left:145px;top:492.2px;width:878px;height:9px;background:#e9956b;"></div>
<svg style="left:0;top:0" width="1024" height="502"><g fill="#fff" opacity="0.75"><rect x="1020.8" y="493.6" width="1.2" height="1.2"/><rect x="1018" y="496.1" width="1.2" height="1.2"/><rect x="1020.8" y="496.1" width="1.2" height="1.2"/><rect x="1015.2" y="498.8" width="1.2" height="1.2"/><rect x="1018" y="498.8" width="1.2" height="1.2"/><rect x="1020.8" y="498.8" width="1.2" height="1.2"/></g></svg>

<!-- window border -->
<div class="a" style="left:0;top:0;width:1024px;height:1px;background:#eea882"></div>
<div class="a" style="left:0;top:0;width:1px;height:502px;background:#c98260"></div>
<div class="a" style="left:1023px;top:0;width:1px;height:502px;background:#eea882"></div>
<div class="a" style="left:0;top:501px;width:1024px;height:1px;background:#d88c66"></div>
</div></body></html>
